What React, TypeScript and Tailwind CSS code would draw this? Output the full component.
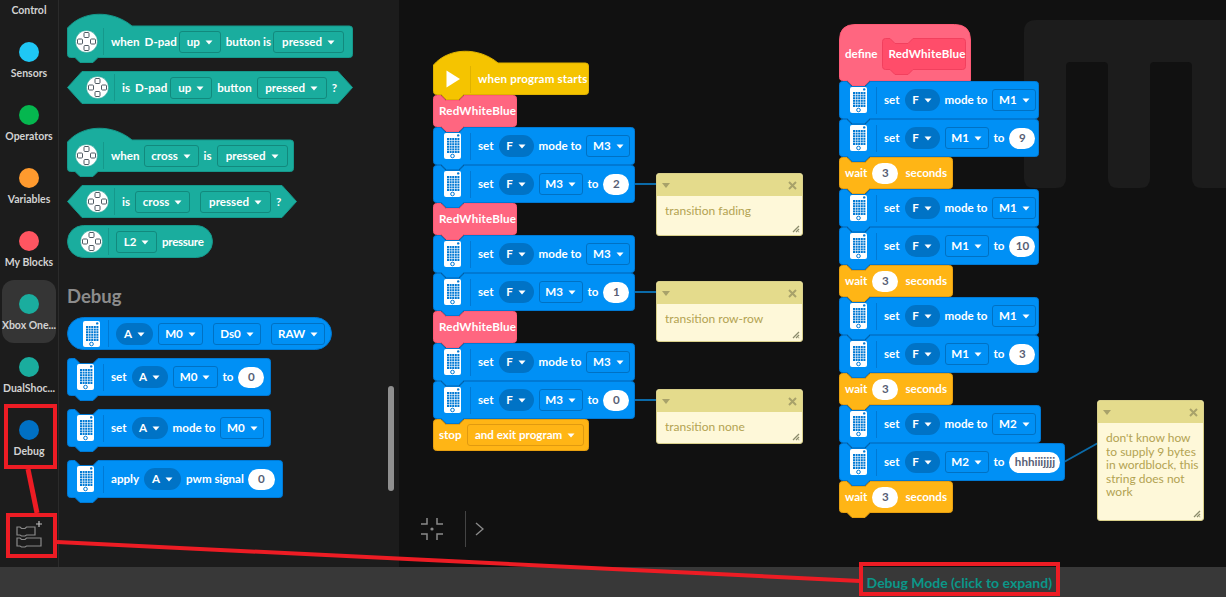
import React from "react";

type Shape = "stack" | "hat" | "cap" | "hex" | "pill" | "define";
type Tone = "teal" | "blue" | "orange";

const fills: Record<string, [string, string]> = {
  teal: ["#1aad9e", "#15988b"],
  blue: ["#0090f5", "#0079d4"],
  orange: ["#ffb515", "#e8a010"],
  yellow: ["#f5c400", "#dfb200"],
  pink: ["#ff6680", "#ff5a76"],
  pinkDark: ["#ff4d6a", "#f2405e"],
};

const dropBorder: Record<Tone, string> = {
  teal: "border-[#12897d]",
  blue: "border-[#0071c3]",
  orange: "border-[#e09a10]",
};

// outline of a block, bumps and notches included
function blockPath(shape: Shape, w: number, h: number) {
  const r = w - 0.5;
  const b = h - 0.5;
  const bottomBump = `H31 L26,${b + 5} H13 L8,${b} H3.5 Q0.5,${b} 0.5,${b - 3}`;
  if (shape === "hex") return `M15,0.5 H${w - 15} L${r},${h / 2} L${w - 15},${b} H15 L0.5,${h / 2} Z`;
  if (shape === "pill") return `M${h / 2},0.5 H${w - h / 2} A${h / 2 - 0.5},${h / 2 - 0.5} 0 0 1 ${w - h / 2},${b} H${h / 2} A${h / 2 - 0.5},${h / 2 - 0.5} 0 0 1 ${h / 2},0.5 Z`;
  if (shape === "hat")
    return `M0.5,14 C16,-4 46,-4 65,12 H${r - 3} Q${r},12 ${r},15 V${b - 3} Q${r},${b} ${r - 3},${b} ${bottomBump} Z`;
  if (shape === "define")
    return `M0.5,16 Q0.5,0.5 16,0.5 H${r - 16} Q${r},0.5 ${r},16 V${b} ${bottomBump} Z`;
  const tail = shape === "cap" ? `H3.5 Q0.5,${b} 0.5,${b - 3}` : bottomBump;
  return `M0.5,3.5 Q0.5,0.5 3.5,0.5 H8 L13,5.5 H26 L31,0.5 H${r - 3} Q${r},0.5 ${r},3.5 V${b - 3} Q${r},${b} ${r - 3},${b} ${tail} Z`;
}

function Block({
  shape = "stack",
  color,
  w,
  h,
  className = "",
  children,
}: {
  shape?: Shape;
  color: string;
  w: number;
  h: number;
  className?: string;
  children: React.ReactNode;
}) {
  const [fill, stroke] = fills[color];
  return (
    <div className={`relative flex items-center gap-[5px] shrink-0 ${className}`} style={{ width: w, height: h }}>
      <svg className="absolute left-0 top-0 overflow-visible" width={w} height={h}>
        <path d={blockPath(shape, w, h)} fill={fill} stroke={stroke} />
      </svg>
      {children}
    </div>
  );
}

function T({ children, className = "" }: { children: React.ReactNode; className?: string }) {
  return <span className={`relative whitespace-nowrap text-[11.6px] font-bold leading-none text-white ${className}`}>{children}</span>;
}

function Caret() {
  return (
    <svg width="8" height="5" viewBox="0 0 8 5" className="mt-[1px] shrink-0">
      <path d="M0.5,0.5 H7.5 L4,4.5 Z" fill="#fff" />
    </svg>
  );
}

function Drop({ w, tone, children, className = "" }: { w: number; tone: Tone; children: React.ReactNode; className?: string }) {
  return (
    <div
      className={`relative flex h-[22px] shrink-0 items-center justify-center gap-[5px] rounded-[3px] border ${dropBorder[tone]} ${className}`}
      style={{ width: w }}
    >
      <T>{children}</T>
      <Caret />
    </div>
  );
}

function Oval({ w = 35, label }: { w?: number; label: string }) {
  return (
    <div className="relative flex h-[22px] shrink-0 items-center justify-center gap-[5px] rounded-full bg-[#0073c6]" style={{ width: w }}>
      <T>{label}</T>
      <Caret />
    </div>
  );
}

function Num({ w = 26, value, className = "" }: { w?: number; value: string; className?: string }) {
  return (
    <div
      className={`relative flex h-[21px] shrink-0 items-center justify-center rounded-full bg-white text-[11.6px] font-bold leading-none text-[#575e75] ${className}`}
      style={{ width: w }}
    >
      {value}
    </div>
  );
}

function PadIcon() {
  return (
    <svg width="23" height="23" viewBox="0 0 23 23" className="shrink-0">
      <circle cx="11.5" cy="11.5" r="11" fill="#fff" stroke="#15988b" strokeWidth="0.5" />
      <g fill="none" stroke="#4f5a63" strokeWidth="1">
        <rect x="9" y="2.5" width="5" height="5" rx="1" />
        <rect x="9" y="15.5" width="5" height="5" rx="1" />
        <rect x="2.5" y="9" width="5" height="5" rx="1" />
        <rect x="15.5" y="9" width="5" height="5" rx="1" />
      </g>
    </svg>
  );
}

function PhoneIcon() {
  const cols = [3, 5.6, 8.2, 10.8, 13.4];
  const rows = [5, 7.6, 10.2, 12.8, 15.4, 18];
  return (
    <svg width="17" height="26" viewBox="0 0 17 26" className="shrink-0">
      <rect x="0" y="0" width="17" height="26" rx="2" fill="#fff" />
      <circle cx="14.2" cy="2.4" r="1.2" fill="#0079d4" />
      {rows.map((y) => cols.map((x) => <rect key={`${x}-${y}`} x={x} y={y} width="2" height="2" fill="#0079d4" />))}
      <circle cx="8.5" cy="23" r="1.8" fill="none" stroke="#0079d4" />
    </svg>
  );
}

function Head({ icon, className }: { icon: "pad" | "phone"; className: string }) {
  return (
    <div className={`relative mr-[2px] flex h-[27px] shrink-0 items-center border-r ${className}`}>
      {icon === "pad" ? <PadIcon /> : <PhoneIcon />}
    </div>
  );
}

function SetMode({ mode, w = 202, drop = 44 }: { mode: string; w?: number; drop?: number }) {
  return (
    <Block color="blue" w={w} h={38}>
      <Head icon="phone" className="w-[38px] border-[#0079d4] pl-[11px]" />
      <T>set</T>
      <Oval label="F" />
      <T>mode to</T>
      <Drop w={drop} tone="blue">{mode}</Drop>
    </Block>
  );
}

function SetValue({ mode, value, w = 202, num = 26 }: { mode: string; value: string; w?: number; num?: number }) {
  return (
    <Block color="blue" w={w} h={38}>
      <Head icon="phone" className="w-[38px] border-[#0079d4] pl-[11px]" />
      <T>set</T>
      <Oval label="F" />
      <Drop w={44} tone="blue">{mode}</Drop>
      <T>to</T>
      <Num w={num} value={value} />
    </Block>
  );
}

function RedWhiteBlue() {
  return (
    <Block color="pink" w={84} h={32} className="pl-[6px]">
      <T className="tracking-[0.2px]">RedWhiteBlue</T>
    </Block>
  );
}

function Wait() {
  return (
    <Block color="orange" w={114} h={32} className="pl-[6px]">
      <T>wait</T>
      <Num value="3" />
      <T className="ml-[2px]">seconds</T>
    </Block>
  );
}

function Note({ className, children }: { className: string; children: React.ReactNode }) {
  return (
    <div className={`absolute flex flex-col overflow-hidden rounded-[3px] border border-[#d9d08a] bg-[#fef8d9] ${className}`}>
      <div className="flex h-[22px] shrink-0 items-center justify-between bg-[#e4db8c] px-[5px]">
        <svg width="8" height="5" viewBox="0 0 8 5">
          <path d="M0,0 H8 L4,5 Z" fill="#a8a26a" />
        </svg>
        <svg width="9" height="9" viewBox="0 0 9 9">
          <path d="M1,1 L8,8 M8,1 L1,8" stroke="#a8a26a" strokeWidth="2" />
        </svg>
      </div>
      <div className="pl-[8px] pr-[4px] pt-[8px] text-[12px] leading-[13.5px] text-[#b3a352]">{children}</div>
      <svg className="absolute bottom-[2px] right-[2px]" width="8" height="8" viewBox="0 0 8 8">
        <path d="M1,7 L7,1 M4,7 L7,4 M6.5,7 L7,6.5" stroke="#8b8b6b" strokeWidth="1.3" />
      </svg>
    </div>
  );
}

const categories = [
  { name: "Control", color: "bg-[#ffab19]" },
  { name: "Sensors", color: "bg-[#1fc7f5]" },
  { name: "Operators", color: "bg-[#05b74f]" },
  { name: "Variables", color: "bg-[#ff9a2e]" },
  { name: "My Blocks", color: "bg-[#ff5561]" },
  { name: "Xbox One...", color: "bg-[#1aad9e]", active: true },
  { name: "DualShoc...", color: "bg-[#1aad9e]" },
  { name: "Debug", color: "bg-[#0070c4]" },
];

export default function App() {
  return (
    <div className="relative flex h-[597px] w-[1226px] flex-col overflow-hidden bg-[#111111] font-['Lato',sans-serif]">
      <div className="flex h-[567px] shrink-0">
        {/* categories */}
        <aside className="flex w-[59px] shrink-0 flex-col items-center overflow-hidden border-r border-[#2b2b2b] bg-[#1c1c1c]">
          <div className="-mt-[35px] flex flex-col items-center">
            {categories.map((c) => (
              <div
                key={c.name}
                className={`flex h-[63px] w-[54px] flex-col items-center rounded-[12px] pt-[14px] ${c.active ? "bg-[#353535]" : ""}`}
              >
                <div className={`h-[20px] w-[20px] rounded-full ${c.color}`} />
                <span className="mt-[5px] whitespace-nowrap text-[10.5px] font-bold leading-[13px] text-[#d2d2d2]">{c.name}</span>
              </div>
            ))}
          </div>
          <div className="mt-auto mb-[19px] flex">
            <svg width="28" height="28" viewBox="0 0 28 28" fill="none" stroke="#8a8a8a" strokeWidth="1.2">
              <path d="M2,7 H5 L6.5,8.5 H10 L11.5,7 H20 V15 H11.5 L10,16 H6.5 L5,15 H2 Z" />
              <path d="M2,18 H5 L6.5,19.5 H10 L11.5,18 H26 V26 H11.5 L10,27 H6.5 L5,26 H2 Z" />
              <path d="M24,1 V7 M21,4 H27" stroke="#bdbdbd" />
            </svg>
          </div>
        </aside>

        {/* palette */}
        <section className="relative flex w-[340px] shrink-0 flex-col bg-[#1c1c1c] pl-[8px] pt-[14px]">
          <Block shape="hat" color="teal" w={286} h={44} className="pt-[11px]">
            <Head icon="pad" className="w-[37px] border-[#15988b] pl-[8px]" />
            <T>when</T>
            <T className="-mr-[3px]">D-pad</T>
            <Drop w={42} tone="teal">up</Drop>
            <T className="-mr-[3px]">button is</T>
            <Drop w={71} tone="teal">pressed</Drop>
          </Block>
          <Block shape="hex" color="teal" w={286} h={33} className="mt-[13px]">
            <Head icon="pad" className="w-[48px] border-[#15988b] pl-[19px]" />
            <T>is</T>
            <T className="-mr-[2px]">D-pad</T>
            <Drop w={42} tone="teal">up</Drop>
            <T>button</T>
            <Drop w={70} tone="teal">pressed</Drop>
            <T>?</T>
          </Block>
          <Block shape="hat" color="teal" w={227} h={44} className="mt-[24px] pt-[11px]">
            <Head icon="pad" className="w-[37px] border-[#15988b] pl-[8px]" />
            <T className="-mr-[1px]">when</T>
            <Drop w={55} tone="teal">cross</Drop>
            <T>is</T>
            <Drop w={71} tone="teal">pressed</Drop>
          </Block>
          <Block shape="hex" color="teal" w={230} h={33} className="mt-[13px]">
            <Head icon="pad" className="w-[48px] border-[#15988b] pl-[19px]" />
            <T>is</T>
            <Drop w={55} tone="teal">cross</Drop>
            <Drop w={71} tone="teal" className="ml-[5px]">pressed</Drop>
            <T>?</T>
          </Block>
          <Block shape="pill" color="teal" w={146} h={33} className="mt-[7px]">
            <Head icon="pad" className="w-[42px] border-[#15988b] pl-[13px]" />
            <Drop w={41} tone="teal">L2</Drop>
            <T className="tracking-[-0.3px]">pressure</T>
          </Block>

          <h2 className="mt-[27px] h-[22px] text-[18.5px] font-bold leading-[22px] text-[#8c8c8c]">Debug</h2>

          <Block shape="pill" color="blue" w={265} h={33} className="mt-[10px]">
            <Head icon="phone" className="w-[42px] border-[#0079d4] pl-[16px]" />
            <Oval w={37} label="A" />
            <Drop w={45} tone="blue">M0</Drop>
            <Drop w={48} tone="blue" className="ml-[5px]">Ds0</Drop>
            <Drop w={54} tone="blue" className="ml-[5px]">RAW</Drop>
          </Block>
          <Block color="blue" w={204} h={38} className="mt-[8px]">
            <Head icon="phone" className="w-[37px] border-[#0079d4] pl-[10px]" />
            <T>set</T>
            <Oval w={36} label="A" />
            <Drop w={45} tone="blue">M0</Drop>
            <T>to</T>
            <Num value="0" />
          </Block>
          <Block color="blue" w={204} h={38} className="mt-[13px]">
            <Head icon="phone" className="w-[37px] border-[#0079d4] pl-[10px]" />
            <T>set</T>
            <Oval w={36} label="A" />
            <T>mode to</T>
            <Drop w={44} tone="blue">M0</Drop>
          </Block>
          <Block color="blue" w={216} h={38} className="mt-[13px]">
            <Head icon="phone" className="w-[37px] border-[#0079d4] pl-[10px]" />
            <T>apply</T>
            <Oval w={37} label="A" />
            <T className="-mr-[1px]">pwm signal</T>
            <Num w={27} value="0" />
          </Block>

          <div className="absolute left-[329px] top-[386px] h-[105px] w-[6px] rounded-full bg-[#8f8f8f]" />
        </section>

        {/* workspace */}
        <main className="relative flex-1 overflow-hidden bg-[#111111]">
          <svg className="absolute left-[625px] top-[20px]" width="202" height="168" viewBox="0 0 202 168">
            <path
              d="M12,0 H202 V168 H178 Q168,168 168,158 V46 Q168,42 164,42 H130 Q126,42 126,46 V158 Q126,168 116,168 H94 Q84,168 84,158 V46 Q84,42 80,42 H46 Q42,42 42,46 V158 Q42,168 32,168 H10 Q0,168 0,158 V12 Q0,0 12,0 Z"
              fill="#1c1c1c"
            />
          </svg>

          <svg className="absolute left-0 top-0 h-full w-full">
            <path d="M235,184 H258 M235,292 H258 M235,400 H258 M665,462 L699,443" stroke="#0b6aa8" strokeWidth="2" fill="none" />
          </svg>

          <div className="absolute left-[34px] top-[51px] flex flex-col">
            <Block shape="hat" color="yellow" w={156} h={44} className="pt-[12px]">
              <div className="relative mr-[2px] flex h-[27px] w-[38px] shrink-0 items-center border-r border-[#dfb200] pl-[13px]">
                <svg width="14" height="18" viewBox="0 0 14 18">
                  <path d="M0.5,0.5 L14,9 L0.5,17.5 Z" fill="#fff" />
                </svg>
              </div>
              <T className="tracking-[0.15px]">when program starts</T>
            </Block>
            <RedWhiteBlue />
            <SetMode mode="M3" />
            <SetValue mode="M3" value="2" />
            <RedWhiteBlue />
            <SetMode mode="M3" />
            <SetValue mode="M3" value="1" />
            <RedWhiteBlue />
            <SetMode mode="M3" />
            <SetValue mode="M3" value="0" />
            <Block shape="cap" color="orange" w={156} h={32} className="pl-[6px]">
              <T>stop</T>
              <Drop w={117} tone="orange">and exit program</Drop>
            </Block>
          </div>

          <div className="absolute left-[440px] top-[24px] flex flex-col">
            <Block shape="define" color="pink" w={132} h={57} className="pl-[6px] pt-[3px]">
              <T>define</T>
              <Block color="pinkDark" w={84} h={32} className="pl-[6px]">
                <T className="tracking-[0.2px]">RedWhiteBlue</T>
              </Block>
            </Block>
            <SetMode mode="M1" w={200} />
            <SetValue mode="M1" value="9" w={200} />
            <Wait />
            <SetMode mode="M1" w={200} />
            <SetValue mode="M1" value="10" w={200} />
            <Wait />
            <SetMode mode="M1" w={200} />
            <SetValue mode="M1" value="3" w={200} />
            <Wait />
            <SetMode mode="M2" w={202} drop={44} />
            <SetValue mode="M2" value="hhhiiijjjj" w={226} num={51} />
            <Wait />
          </div>

          <Note className="left-[257px] top-[173px] h-[63px] w-[147px]">transition fading</Note>
          <Note className="left-[257px] top-[281px] h-[61px] w-[147px]">transition row-row</Note>
          <Note className="left-[257px] top-[389px] h-[55px] w-[147px]">transition none</Note>
          <Note className="left-[698px] top-[400px] h-[121px] w-[107px]">
            don't know how to supply 9 bytes in wordblock, this string does not work
          </Note>

          <div className="absolute bottom-[20px] left-[21px] flex items-center">
            <svg width="24" height="24" viewBox="0 0 24 24" fill="none" stroke="#8a8a8a" strokeWidth="1.5">
              <path d="M7,1 V7 H1 M17,1 V7 H23 M1,17 H7 V23 M23,17 H17 V23" />
              <circle cx="12" cy="12" r="1.6" fill="#8a8a8a" stroke="none" />
            </svg>
            <div className="ml-[21px] h-[36px] w-px bg-[#444444]" />
            <svg className="ml-[9px]" width="9" height="14" viewBox="0 0 9 14" fill="none" stroke="#8a8a8a" strokeWidth="1.4">
              <path d="M1,1 L8,7 L1,13" />
            </svg>
          </div>
        </main>
      </div>

      <footer className="flex h-[30px] items-center justify-end bg-[#383838] pr-[174px]">
        <span className="text-[14px] font-bold text-[#0b9688]">Debug Mode (click to expand)</span>
      </footer>

      {/* red callouts drawn over the screenshot */}
      <svg className="pointer-events-none absolute left-0 top-0" width="1226" height="597" fill="none" stroke="#ed1c24">
        <rect x="6" y="406" width="49" height="61" strokeWidth="4" />
        <rect x="8" y="515" width="47" height="41" strokeWidth="4" />
        <rect x="861" y="564" width="197" height="30" strokeWidth="4" />
        <path d="M28,469 L37,513" strokeWidth="5" />
        <path d="M57,542 L860,581" strokeWidth="4" />
      </svg>
    </div>
  );
}
